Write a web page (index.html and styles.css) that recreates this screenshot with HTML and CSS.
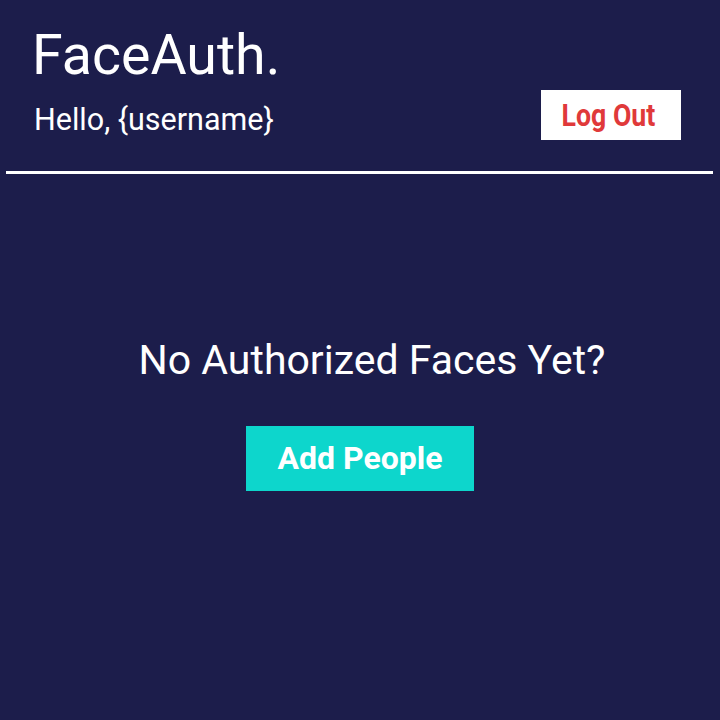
FILE: index.html
```html
<!DOCTYPE html>
<html>
<head>
<meta charset="utf-8">
<link rel="stylesheet" href="styles.css">
</head>
<body>
<div class="app">
  <header class="header">
    <h1 class="brand">FaceAuth.</h1>
    <div class="user-row">
      <span class="greeting">Hello, {username}</span>
      <button class="logout"><span class="logout-label">Log Out</span></button>
    </div>
  </header>
  <hr class="divider">
  <main class="empty">
    <p class="empty-text">No Authorized Faces Yet?</p>
    <button class="add">Add People</button>
  </main>
</div>
</body>
</html>
```
FILE: styles.css
```css
html, body {
  margin: 0;
  padding: 0;
  background: #1c1d4b;
}
body {
  font-family: Roboto, "Noto Sans", sans-serif;
  color: #ffffff;
  width: 720px;
  height: 720px;
  overflow: hidden;
}
.app {
  display: flex;
  flex-direction: column;
  height: 720px;
}
.header {
  padding: 24px 39px 0 32px;
}
.brand {
  margin: 0;
  font-size: 55.5px;
  font-weight: 400;
  line-height: 64px;
}
.user-row {
  display: flex;
  justify-content: space-between;
  align-items: flex-start;
  margin-top: 2px;
}
.greeting {
  font-size: 30.5px;
  line-height: 36px;
  margin-top: 12px;
  padding-left: 2px;
}
.logout {
  width: 140px;
  height: 50px;
  border: none;
  background: #ffffff;
  color: #e0393a;
  font-family: Roboto, sans-serif;
  font-weight: 700;
  font-size: 31px;
  padding: 0 6px 0 0;
  display: flex;
  align-items: center;
  justify-content: center;
}
.logout-label {
  display: inline-block;
  transform: scaleX(0.86);
}
.divider {
  margin: 31px 7px 0 6px;
  border: none;
  height: 3px;
  background: #ffffff;
}
.empty {
  display: flex;
  flex-direction: column;
  align-items: center;
  padding-top: 162px;
}
.empty-text {
  margin: 0;
  font-size: 41px;
  line-height: 48px;
  padding-left: 24px;
}
.add {
  margin-top: 42px;
  width: 228px;
  height: 65px;
  border: none;
  background: #0dd6cc;
  color: #ffffff;
  font-family: Roboto, sans-serif;
  font-weight: 700;
  font-size: 32px;
  padding: 0 0 2px 0;
}
```
